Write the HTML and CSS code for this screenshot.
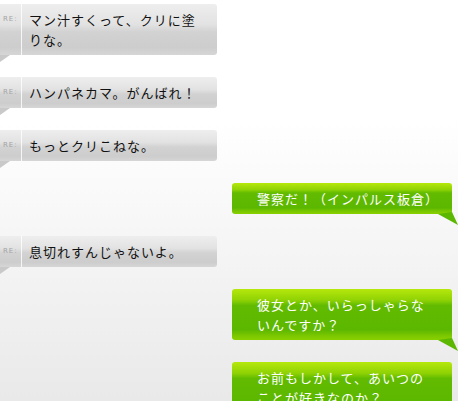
FILE: index.html
```html
<!DOCTYPE html>
<html lang="ja">
<head>
    <meta charset="UTF-8">
    <title>チャット</title>
    <link rel="stylesheet" href="styles.css">
</head>
<body>
    <div id="thread">
        <div class="msg left">
            <div class="bubble gray">
                <span class="re">RE:</span>
                <p class="txt">マン汁すくって、クリに塗<br>りな。</p>
            </div>
        </div>
        <div class="msg left">
            <div class="bubble gray">
                <span class="re">RE:</span>
                <p class="txt">ハンパネカマ。がんばれ！</p>
            </div>
        </div>
        <div class="msg left">
            <div class="bubble gray">
                <span class="re">RE:</span>
                <p class="txt">もっとクリこねな。</p>
            </div>
        </div>
        <div class="msg right">
            <div class="bubble green">
                <p class="txt">警察だ！（インパルス板倉）</p>
            </div>
        </div>
        <div class="msg left">
            <div class="bubble gray">
                <span class="re">RE:</span>
                <p class="txt">息切れすんじゃないよ。</p>
            </div>
        </div>
        <div class="msg right">
            <div class="bubble green">
                <p class="txt">彼女とか、いらっしゃらな<br>いんですか？</p>
            </div>
        </div>
        <div class="msg right">
            <div class="bubble green">
                <p class="txt">お前もしかして、あいつの<br>ことが好きなのか？</p>
            </div>
        </div>
    </div>
</body>
</html>
```

FILE: styles.css
```css
*{
    margin: 0;
    padding: 0;
}
html, body{
    height: 100%;
}
body{
    background: linear-gradient(to bottom, #ffffff 0%, #ffffff 30%, #f4f4f4 65%, #e9e9e9 100%);
    font-family: "Noto Sans CJK JP", "Noto Sans", sans-serif;
    font-size: 13px;
    overflow: hidden;
}
#thread{
    display: flex;
    flex-direction: column;
    gap: 22px;
    padding-top: 4px;
}
.msg{
    display: flex;
}
.msg.right{
    justify-content: flex-end;
    padding-right: 6px;
}
.bubble{
    position: relative;
    display: flex;
}
.txt{
    line-height: 20px;
    letter-spacing: 1px;
    padding: 6px 0 5px;
    white-space: nowrap;
}

/* gray (left) */
.gray{
    width: 217px;
    border-radius: 0 3px 3px 0;
    background: linear-gradient(to bottom, #eeeeee 0%, #e2e2e2 40%, #d2d2d2 55%, #cdcdcd 85%, #d6d6d6 100%);
    color: #111;
}
.gray .re{
    width: 22px;
    flex: none;
    border-right: 1px solid rgba(255, 255, 255, 0.8);
    font-family: "DejaVu Sans", sans-serif;
    font-size: 7px;
    color: #a4a4a4;
    line-height: 10px;
    padding: 10px 0 0 3px;
    box-sizing: border-box;
    letter-spacing: 1px;
}
.gray .txt{
    padding-left: 7px;
}
.gray::after{
    content: "";
    position: absolute;
    left: 0;
    top: 100%;
    width: 10px;
    height: 7px;
    background: #c9c9c9;
    clip-path: polygon(0 0, 100% 0, 0 100%);
}

/* green (right) */
.green{
    width: 220px;
    border-radius: 3px;
    background: linear-gradient(to bottom, #b6e80c 0%, #8fd204 22%, #62bb00 32%, #5cb700 80%, #7cc800 92%, #8ad000 100%);
    color: #fff;
}
.green .txt{
    padding-left: 25px;
}
.green::after{
    content: "";
    position: absolute;
    right: -6px;
    top: calc(100% - 2px);
    width: 20px;
    height: 13px;
    background: #5cb700;
    clip-path: polygon(0 2px, 14px 0, 100% 100%);
}
```
